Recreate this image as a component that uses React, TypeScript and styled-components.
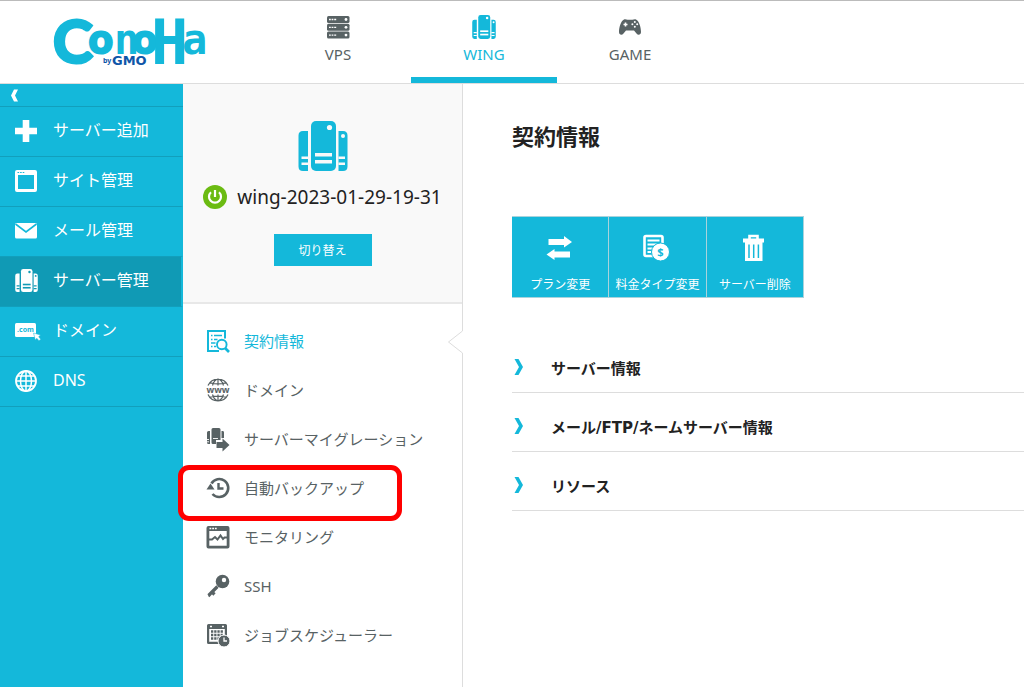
import React from "react";
import styled, { createGlobalStyle } from "styled-components";

const cyan = "#14b8da";
const cyanDark = "#109ab5";
const slate = "#586264";

const GlobalStyle = createGlobalStyle`
  *, *::before, *::after { box-sizing: border-box; }
  body {
    margin: 0;
    background: #fff;
    color: #222;
    font-family: "Noto Sans", "Noto Sans CJK JP", sans-serif;
    font-size: 15px;
  }
  a { color: inherit; text-decoration: none; }
  button { font: inherit; border: 0; padding: 0; cursor: pointer; }
  ul { list-style: none; margin: 0; padding: 0; }
  svg { display: block; flex: none; overflow: visible; }
`;

const Page = styled.div`
  min-height: 100vh;
  display: flex;
  flex-direction: column;
`;

const Header = styled.header`
  display: flex;
  height: 84px;
  border-top: 1px solid #bbb;
  border-bottom: 1px solid #ddd;
`;

const LogoLink = styled.a`
  width: 265px;
  padding-left: 50px;
`;

const ServiceNav = styled.nav`
  display: flex;
`;

const ServiceTab = styled.a<{ $active?: boolean }>`
  width: 146px;
  display: flex;
  flex-direction: column;
  align-items: center;
  gap: 5px;
  padding-top: 14px;
  font-size: 15px;
  line-height: 20px;
  color: ${(p) => (p.$active ? cyan : slate)};
  border-bottom: 6px solid ${(p) => (p.$active ? cyan : "transparent")};
`;

const Columns = styled.div`
  flex: 1;
  display: flex;
`;

const Sidebar = styled.nav`
  flex: 0 0 183px;
  background: ${cyan};
  color: #fff;
`;

const Collapse = styled.button`
  display: flex;
  align-items: center;
  width: 100%;
  height: 23px;
  padding-left: 10px;
  background: none;
  color: #fff;
  border-bottom: 1px solid #129fbc;
`;

const SideLink = styled.a<{ $active?: boolean }>`
  display: flex;
  align-items: center;
  gap: 14px;
  height: 50px;
  padding: 0 0 2px 13px;
  font-size: 16px;
  line-height: 24px;
  border-bottom: 1px solid #129fbc;
  border-right: 2px solid ${(p) => (p.$active ? cyan : "transparent")};
  background: ${(p) => (p.$active ? cyanDark : "transparent")};

  span { padding-bottom: 2px; }
`;

const IconSlot = styled.div`
  display: flex;
  justify-content: center;
  width: 26px;
`;

const Panel = styled.section`
  flex: 0 0 280px;
  border-right: 1px solid #ddd;
`;

const ServerCard = styled.div`
  display: flex;
  flex-direction: column;
  align-items: center;
  height: 220px;
  padding-top: 37px;
  background: #f9f9f9;
  border-bottom: 2px solid #e8e8e8;

  > svg { color: ${cyan}; }
`;

const ServerName = styled.div`
  display: flex;
  align-items: center;
  gap: 10px;
  margin: 12px 0 23px;
  font-size: 19px;
  line-height: 28px;
`;

const SwitchButton = styled.button`
  width: 98px;
  height: 32px;
  background: ${cyan};
  color: #fff;
  font-size: 12px;
`;

const Menu = styled.ul`
  padding-top: 12px;
`;

const MenuItem = styled.li`
  position: relative;
`;

const MenuLink = styled.a<{ $active?: boolean }>`
  display: flex;
  align-items: center;
  gap: 14px;
  height: 49px;
  padding-left: 23px;
  color: ${(p) => (p.$active ? cyan : slate)};
`;

const Notch = styled.svg`
  position: absolute;
  right: -1px;
  top: 13px;
`;

const Highlight = styled.div`
  position: absolute;
  left: -5px;
  top: 2px;
  width: 224px;
  height: 56px;
  border: 5px solid #f00;
  border-radius: 11px;
  pointer-events: none;
`;

const Main = styled.main`
  flex: 1;
  min-width: 0;
  padding: 35px 0 0 49px;
`;

const Title = styled.h1`
  margin: 0 0 63px;
  font-size: 22px;
  line-height: 34px;
  font-weight: 700;
`;

const Actions = styled.div`
  display: flex;
  width: 292px;
`;

const ActionButton = styled.button`
  flex: 1;
  display: flex;
  flex-direction: column;
  align-items: center;
  justify-content: space-between;
  height: 82px;
  padding: 16px 0 3px;
  background: ${cyan};
  color: #fff;
  font-size: 12px;
  line-height: 18px;
  white-space: nowrap;
  border: 1px solid #a9d3dc;
  border-left: 0;
`;

const Sections = styled.div`
  padding-top: 36px;
`;

const SectionButton = styled.button`
  display: flex;
  align-items: center;
  gap: 26px;
  width: 100%;
  height: 59px;
  padding: 8px 0 0 2px;
  background: none;
  color: #222;
  font-family: "DejaVu Sans", "Noto Sans CJK JP", sans-serif;
  font-weight: 700;
  border-bottom: 1px solid #ddd;
`;

type IconProps = { size?: number; bg?: string };

const WingIcon = ({ size = 24, bg = "#fff" }: IconProps) => (
  <svg width={size} height={size} viewBox="0 0 50 50" fill="currentColor" aria-hidden="true">
    <path d="M5 10h5v40H5q-4.500 0-4.500-4.500V14.500Q.5 10 5 10zM40.500 10H45q4.500 0 4.500 4.500v31Q49.500 50 45 50h-4.500z" />
    <rect x="13" y="0" width="25" height="50" rx="5" />
    <g fill={bg}>
      <circle cx="31.500" cy="6.500" r="2.600" />
      <circle cx="45" cy="15" r="2" />
      <rect x="17" y="32" width="17" height="3.500" />
      <rect x="17" y="39" width="17" height="3.500" />
      <path d="M3.500 35.500H10v2.500H3.500zM3.500 41.500H10V44H3.500zM40.500 35.500H47v2.500h-6.500zM40.500 41.500H47V44h-6.500z" />
    </g>
  </svg>
);

const VpsIcon = () => (
  <svg width="24" height="24" viewBox="0 0 24 24" aria-hidden="true">
    {[1, 8.800, 16.600].map((y) => (
      <g key={y}>
        <rect x="1" y={y} width="22.500" height="7" rx="1.500" fill="currentColor" />
        <path d={`M3 ${y + 3.500}h8`} stroke="#fff" strokeWidth="1.300" strokeDasharray="1.800 .8" />
        <circle cx="20" cy={y + 3.500} r="1.400" fill="#fff" />
      </g>
    ))}
  </svg>
);

const GameIcon = () => (
  <svg width="24" height="24" viewBox="0 0 24 24" aria-hidden="true">
    <path d="M6 4.500c1.500-.7 2.500.3 3.500.3h5c1 0 2-1 3.500-.3 3 1 5 8 5 12.500 0 3-3 3.500-4.500 1.500L16 15.500H8l-2.500 3C4 20.500 1 20 1 17 1 12.500 3 5.500 6 4.500z" fill="currentColor" />
    <path d="M7.500 7.500v4M5.500 9.500h4" stroke="#fff" strokeWidth="1.600" />
    <g fill="#fff">
      <circle cx="16.800" cy="6.900" r="1" /><circle cx="16.800" cy="11.700" r="1" />
      <circle cx="14.400" cy="9.300" r="1" /><circle cx="19.200" cy="9.300" r="1" />
    </g>
  </svg>
);

const PlusIcon = () => (
  <svg width="26" height="26" viewBox="0 0 26 26" aria-hidden="true">
    <path d="M13 2v22M2 13h22" stroke="currentColor" strokeWidth="6.600" />
  </svg>
);

const SiteIcon = () => (
  <svg width="26" height="26" viewBox="0 0 26 26" aria-hidden="true">
    <path fillRule="evenodd" fill="currentColor" d="M4 2h18q2 0 2 2v18q0 2-2 2H4q-2 0-2-2V4q0-2 2-2zM5 7v14h16V7z" />
    <path d="M4.500 4.500h7" stroke={cyan} strokeWidth="1.200" strokeDasharray="1.600 1" />
  </svg>
);

const MailIcon = () => (
  <svg width="26" height="26" viewBox="0 0 26 26" aria-hidden="true">
    <rect x="2" y="5" width="22" height="15.500" rx="1.500" fill="currentColor" />
    <path d="M2.500 6 13 14 23.500 6" fill="none" stroke={cyan} strokeWidth="1.600" />
  </svg>
);

const ComIcon = () => (
  <svg width="26" height="26" viewBox="0 0 26 26" aria-hidden="true">
    <rect x="2" y="5" width="21" height="14" rx="1.500" fill="currentColor" />
    <text x="12.500" y="13.500" fontSize="7" fontWeight="700" textAnchor="middle" fill={cyan}>.com</text>
    <path d="m20.500 15 7 2-1.800 1.700 2 2.500-1.700 1.500-2.200-2.400-1.500 1.700z" fill="currentColor" stroke={cyan} strokeWidth=".5" />
  </svg>
);

const GlobeIcon = () => (
  <svg width="26" height="26" viewBox="0 0 26 26" fill="none" stroke="currentColor" strokeWidth="1.500" aria-hidden="true">
    <circle cx="13" cy="13" r="10" strokeWidth="1.800" />
    <ellipse cx="13" cy="13" rx="5.500" ry="10" />
    <path d="M13 3v20M3 13h20M4.500 8h17M4.500 18h17" />
  </svg>
);

const PowerIcon = () => (
  <svg width="24" height="24" viewBox="0 0 24 24" fill="none" role="img" aria-label="稼働中">
    <circle cx="12" cy="12" r="12" fill="#6bbb12" />
    <path d="M8 7.200a6 6 0 1 0 8 0" stroke="#fff" strokeWidth="2.200" />
    <path d="M12 5v7" stroke="#fff" strokeWidth="2.200" />
  </svg>
);

const ContractIcon = () => (
  <svg width="24" height="24" viewBox="0 0 24 24" fill="none" stroke="currentColor" aria-hidden="true">
    <path d="M19 9.500V2H2v20h11" strokeWidth="2" />
    <path d="M5 6.500h1.500M8 6.500h8M5 10.500h1.500M8 10.500h3.500M5 14h4.500M5 17.500h1.500M8 17.500h2" strokeWidth="1.600" />
    <circle cx="15.800" cy="15.500" r="4.800" strokeWidth="1.900" />
    <path d="m19 19 4 4" strokeWidth="2.600" />
  </svg>
);

const WwwIcon = () => (
  <svg width="24" height="24" viewBox="0 0 24 24" fill="none" stroke="currentColor" aria-hidden="true">
    <path d="M2 7.500a11 11 0 0 1 20 0M2 16.500a11 11 0 0 0 20 0M6.500 7.500Q8 2 12 1q4 1 5.500 6.500M6.500 16.500Q8 22 12 23q4-1 5.500-6.500M12 1v6.500M12 16.500V23M4 4.800q8 2 16 0M4 19.200q8-2 16 0" strokeWidth="1.200" />
    <text x="12" y="14.500" fontSize="9" fontWeight="700" textAnchor="middle" fill="currentColor" stroke="none">www</text>
  </svg>
);

const MigrationIcon = () => (
  <svg width="24" height="24" viewBox="0 0 24 24" fill="currentColor" aria-hidden="true">
    <path d="M2.500 4H4v13H2.500Q1 17 1 15.500v-10Q1 4 2.500 4zM15.500 4H17q1 0 1 1.500V11h-2.500zM7 1h6q1.500 0 1.500 1.500V13H10v4H7q-1.500 0-1.500-1.500v-13Q5.500 1 7 1z" />
    <path d="M10.500 15h6V11.500l7 6.500-7 6.500V21h-6z" />
    <path d="M1 12.500h2M1 14.800h2M7 11.500h5" stroke="#fff" strokeWidth=".9" />
  </svg>
);

const BackupIcon = () => (
  <svg width="24" height="24" viewBox="0 0 24 24" fill="none" stroke="currentColor" aria-hidden="true">
    <path d="M5.500 7.500A9 9 0 1 1 6.500 18" strokeWidth="2.600" />
    <path d="M.5 13.500 4.500 7.500 8.500 13.500z" fill="currentColor" stroke="none" />
    <path d="M12.500 7v5.500h5" strokeWidth="2.400" />
  </svg>
);

const MonitorIcon = () => (
  <svg width="24" height="24" viewBox="0 0 24 24" aria-hidden="true">
    <path fillRule="evenodd" fill="currentColor" d="M2.500 1h19q2 0 2 2v18.500q0 2-2 2h-19q-2 0-2-2V3q0-2 2-2zM3.300 6v14.800h17.400V6z" />
    <path d="M3.500 3.500h8" stroke="#fff" strokeWidth="1.300" strokeDasharray="1.800 .9" />
    <path d="M3 14.500h3l3-2.500 2.500 2.500 3-4 2.500 3.500 1.500-1.500H21" fill="none" stroke="currentColor" strokeWidth="2" />
  </svg>
);

const KeyIcon = () => (
  <svg width="24" height="24" viewBox="0 0 24 24" aria-hidden="true">
    <path d="M11.500 12.500 2.500 21.500M6 18l2.500 2.500M3 20.500 4.500 22" stroke="currentColor" strokeWidth="3.200" />
    <circle cx="16.500" cy="7.500" r="6.800" fill="currentColor" />
    <circle cx="18" cy="6" r="2.200" fill="#fff" />
  </svg>
);

const SchedulerIcon = () => (
  <svg width="24" height="24" viewBox="0 0 24 24" aria-hidden="true">
    <path fillRule="evenodd" fill="currentColor" d="M2.500 1h17Q21 1 21 2.500V21H2.500Q1 21 1 19.500v-17Q1 1 2.500 1zM3.200 6v12.800h15.600V6z" />
    <path d="M4 3.500h2M16 3.500h2" stroke="#fff" strokeWidth="1.600" />
    <path d="M5 8.500h12M5 12h12M5 15.500h12" stroke="currentColor" strokeWidth="2.300" strokeDasharray="2.300 .9" />
    <circle cx="18" cy="18" r="6" fill="currentColor" stroke="#fff" />
    <path d="M18 14.500V18h3" fill="none" stroke="#fff" strokeWidth="1.300" />
  </svg>
);

const SwapIcon = () => (
  <svg width="30" height="30" viewBox="0 0 30 30" fill="currentColor" aria-hidden="true">
    <path d="M3.500 6h15.500V3L27 9l-8 5.500V12H3.500zM25 18.500H9.500V16L1.500 21.500l8 5.500v-2.500H25z" />
  </svg>
);

const BillingIcon = () => (
  <svg width="30" height="30" viewBox="0 0 30 30" fill="none" stroke="currentColor" aria-hidden="true">
    <rect x="2.500" y="3" width="18" height="20" rx="1.500" strokeWidth="2.600" />
    <path d="M5.500 7.500h12M5.500 11.500h12M5.500 15.500h6M5.500 19h4" strokeWidth="1.900" />
    <circle cx="18.500" cy="19" r="9" fill="currentColor" stroke={cyan} />
    <text x="18.500" y="23" fontSize="11" fontWeight="700" textAnchor="middle" fill={cyan} stroke="none">$</text>
  </svg>
);

const TrashIcon = () => (
  <svg width="30" height="30" viewBox="0 0 30 30" aria-hidden="true">
    <path d="M9.500 6V3h8v3" fill="none" stroke="currentColor" strokeWidth="2.600" />
    <path d="M3 5.500h21v4H3zM5 9h17.500v19H5z" fill="currentColor" />
    <path d="M9 11.500v13.500M13.700 11.500v13.500M18.400 11.500v13.500" stroke={cyan} strokeWidth="1.500" />
  </svg>
);

const Logo = () => (
  <svg width="160" height="82" viewBox="0 0 160 82" role="img" aria-label="ConoHa by GMO">
    <text fontFamily="Lato, sans-serif" fontWeight="700" fill={cyan} stroke={cyan} strokeWidth="3">
      <tspan x="3" y="62" fontSize="60">C</tspan>
      <tspan x="39" y="52" fontSize="41">o</tspan>
      <tspan x="64" y="53" fontSize="42" fontFamily="DejaVu Sans Mono, monospace" strokeWidth="0">n</tspan>
      <tspan x="83" y="52" fontSize="41">o</tspan>
      <tspan x="101" y="63" fontSize="62" fontFamily="DejaVu Sans Mono, monospace" strokeWidth="0">H</tspan>
      <tspan x="132" y="53" fontSize="42" fontFamily="DejaVu Sans Mono, monospace" strokeWidth="0">a</tspan>
    </text>
    <text fontWeight="700" fill="#0f56a8">
      <tspan x="53" y="62" fontSize="7">by</tspan>
      <tspan x="62" y="64" fontSize="13" fontFamily="DejaVu Sans, sans-serif" stroke="#fff" strokeWidth="1" paintOrder="stroke">GMO</tspan>
    </text>
  </svg>
);

const ChevronLeft = () => (
  <svg width="9" height="13" viewBox="0 0 9 13" aria-hidden="true">
    <path d="M4 .5h4L5 6.500l3 6H4l-3-6z" fill="currentColor" />
  </svg>
);

const ChevronRight = () => (
  <svg width="11" height="16" viewBox="0 0 11 16" aria-hidden="true">
    <path d="M.5 0h4L9 8l-4.500 8h-4L5 8z" fill={cyan} />
  </svg>
);

const sideItems = [
  { label: "サーバー追加", icon: <PlusIcon /> },
  { label: "サイト管理", icon: <SiteIcon /> },
  { label: "メール管理", icon: <MailIcon /> },
  { label: "サーバー管理", icon: <WingIcon size={23} bg={cyanDark} />, active: true },
  { label: "ドメイン", icon: <ComIcon /> },
  { label: "DNS", icon: <GlobeIcon /> },
];

const menuItems = [
  { label: "契約情報", icon: <ContractIcon />, active: true },
  { label: "ドメイン", icon: <WwwIcon /> },
  { label: "サーバーマイグレーション", icon: <MigrationIcon /> },
  { label: "自動バックアップ", icon: <BackupIcon />, marked: true },
  { label: "モニタリング", icon: <MonitorIcon /> },
  { label: "SSH", icon: <KeyIcon /> },
  { label: "ジョブスケジューラー", icon: <SchedulerIcon /> },
];

const actions = [
  { label: "プラン変更", icon: <SwapIcon /> },
  { label: "料金タイプ変更", icon: <BillingIcon /> },
  { label: "サーバー削除", icon: <TrashIcon /> },
];

const sections = ["サーバー情報", "メール/FTP/ネームサーバー情報", "リソース"];

export default function App() {
  return (
    <Page>
      <GlobalStyle />
      <Header>
        <LogoLink href="#"><Logo /></LogoLink>
        <ServiceNav>
          <ServiceTab href="#"><VpsIcon />VPS</ServiceTab>
          <ServiceTab href="#" $active aria-current="page"><WingIcon />WING</ServiceTab>
          <ServiceTab href="#"><GameIcon />GAME</ServiceTab>
        </ServiceNav>
      </Header>
      <Columns>
        <Sidebar>
          <Collapse aria-label="メニューを閉じる"><ChevronLeft /></Collapse>
          <ul>
            {sideItems.map((item) => (
              <li key={item.label}>
                <SideLink href="#" $active={item.active}>
                  <IconSlot>{item.icon}</IconSlot>
                  <span>{item.label}</span>
                </SideLink>
              </li>
            ))}
          </ul>
        </Sidebar>
        <Panel>
          <ServerCard>
            <WingIcon size={50} bg="#f9f9f9" />
            <ServerName><PowerIcon />wing-2023-01-29-19-31</ServerName>
            <SwitchButton>切り替え</SwitchButton>
          </ServerCard>
          <Menu>
            {menuItems.map((item) => (
              <MenuItem key={item.label}>
                <MenuLink href="#" $active={item.active}>
                  {item.icon}
                  {item.label}
                </MenuLink>
                {item.active && (
                  <Notch width="16" height="26" viewBox="0 0 16 26" aria-hidden="true">
                    <path d="M16 1.500h-.5L1.500 13l14 11.500h.5z" fill="#fff" />
                    <path d="M15.500 0v2L1.500 13l14 11v2" fill="none" stroke="#ddd" />
                  </Notch>
                )}
                {item.marked && <Highlight />}
              </MenuItem>
            ))}
          </Menu>
        </Panel>
        <Main>
          <Title>契約情報</Title>
          <Actions>
            {actions.map((action) => (
              <ActionButton key={action.label}>
                {action.icon}
                {action.label}
              </ActionButton>
            ))}
          </Actions>
          <Sections>
            {sections.map((label) => (
              <SectionButton key={label} aria-expanded={false}>
                <ChevronRight />
                {label}
              </SectionButton>
            ))}
          </Sections>
        </Main>
      </Columns>
    </Page>
  );
}
